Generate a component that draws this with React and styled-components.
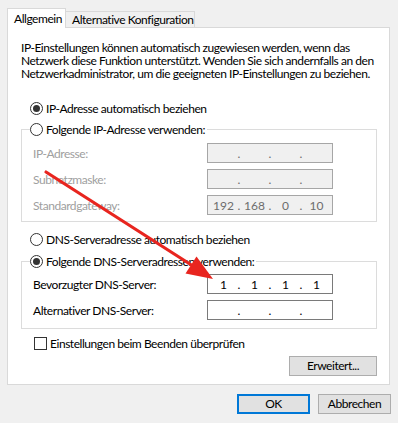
import React from "react";
import styled, { createGlobalStyle } from "styled-components";

const Global = createGlobalStyle`
  html, body { margin: 0; padding: 0; background: #f0f0f0; }
  * { box-sizing: border-box; }
`;

const Root = styled.div`
  position: relative;
  width: 398px;
  height: 423px;
  background: #f0f0f0;
  padding: 8px 8px 0 7px;
  font-family: Lato, "Noto Sans", sans-serif;
  font-size: 12px;
  letter-spacing: -0.45px;
  color: #000;
  overflow: hidden;
`;

const TabStrip = styled.div`
  display: flex;
  align-items: flex-end;
  height: 19px;
`;

const Tab = styled.div`
  position: relative;
  z-index: ${(p) => (p.$active ? 2 : 1)};
  height: ${(p) => (p.$active ? "20px" : "16px")};
  margin-bottom: ${(p) => (p.$active ? "-1px" : "0")};
  margin-left: ${(p) => (p.$active ? "0" : "-1px")};
  width: ${(p) => p.$w}px;
  padding: 0 ${(p) => (p.$active ? "6px" : "6px")};
  display: flex;
  align-items: center;
  background: ${(p) => (p.$active ? "#fff" : "#f0f0f0")};
  border: 1px solid #d9d9d9;
  border-bottom: none;
  white-space: nowrap;
  line-height: 1;
`;

const Panel = styled.div`
  height: 358px;
  background: #fff;
  border: 1px solid #d9d9d9;
  padding: 13px 12px 0 13px;
  display: flex;
  flex-direction: column;
`;

const Intro = styled.p`
  margin: 0;
  line-height: 13px;
  white-space: nowrap;
`;

const RadioRow = styled.label`
  display: flex;
  align-items: center;
  gap: 3px;
  height: 16px;
  white-space: nowrap;
  padding-left: ${(p) => p.$indent || 0}px;
  margin-top: ${(p) => p.$mt || 0}px;
`;

const RadioCircle = styled.span`
  width: 13px;
  height: 13px;
  border-radius: 50%;
  border: 1px solid #333;
  display: flex;
  align-items: center;
  justify-content: center;
  background: #fff;
  flex: none;
  &::after {
    content: "";
    width: 7px;
    height: 7px;
    border-radius: 50%;
    background: #333;
    display: ${(p) => (p.$checked ? "block" : "none")};
  }
`;

const Group = styled.fieldset`
  margin: ${(p) => p.$mt}px 0 0 0;
  border: 1px solid #dcdcdc;
  padding: ${(p) => p.$pt}px 43px ${(p) => p.$pb}px 11px;
  display: flex;
  flex-direction: column;
  gap: 6px;
  min-width: 0;
`;

const Legend = styled.legend`
  padding: 0 2px 0 0;
  margin-left: -3px;
`;

const FieldRow = styled.div`
  display: flex;
  align-items: center;
  justify-content: space-between;
  height: 20px;
  color: ${(p) => (p.$disabled ? "#a0a0a0" : "#000")};
  white-space: nowrap;
`;

const IpBox = styled.div`
  width: 126px;
  height: 20px;
  border: 1px solid ${(p) => (p.$disabled ? "#a6a6a6" : "#7a7a7a")};
  background: ${(p) => (p.$disabled ? "#f0f0f0" : "#fff")};
  color: ${(p) => (p.$disabled ? "#6d6d6d" : "#000")};
  display: flex;
  align-items: center;
  letter-spacing: 0;
`;

const Octet = styled.span`
  flex: 1;
  text-align: center;
`;

const Dot = styled.span`
  width: 0;
  display: flex;
  justify-content: center;
`;

const CheckRow = styled.label`
  display: flex;
  align-items: center;
  gap: 3px;
  height: 16px;
  margin-top: 6px;
  padding-left: 13px;
  white-space: nowrap;
`;

const CheckBox = styled.span`
  width: 13px;
  height: 13px;
  border: 1px solid #333;
  background: #fff;
  flex: none;
`;

const RightBar = styled.div`
  display: flex;
  justify-content: flex-end;
  gap: 8px;
  margin-top: ${(p) => p.$mt}px;
  margin-right: ${(p) => p.$mr || 0}px;
`;

const Button = styled.button`
  font: inherit;
  letter-spacing: inherit;
  color: #000;
  width: ${(p) => p.$w}px;
  height: 20px;
  padding: 0;
  background: #e1e1e1;
  border: ${(p) => (p.$default ? "2px solid #0078d7" : "1px solid #adadad")};
  display: flex;
  align-items: center;
  justify-content: center;
  line-height: 1;
`;

const ArrowLayer = styled.svg`
  position: absolute;
  left: 0;
  top: 0;
  width: 398px;
  height: 423px;
  pointer-events: none;
`;

function Ip({ parts, disabled }) {
  const p = parts || ["", "", "", ""];
  return (
    <IpBox $disabled={disabled}>
      <Octet>{p[0]}</Octet>
      <Dot>.</Dot>
      <Octet>{p[1]}</Octet>
      <Dot>.</Dot>
      <Octet>{p[2]}</Octet>
      <Dot>.</Dot>
      <Octet>{p[3]}</Octet>
    </IpBox>
  );
}

export default function App() {
  return (
    <>
      <Global />
      <Root>
        <TabStrip>
          <Tab $active $w={59}>Allgemein</Tab>
          <Tab $w={130}>Alternative Konfiguration</Tab>
        </TabStrip>
        <Panel>
          <Intro>
            IP-Einstellungen können automatisch zugewiesen werden, wenn das
            <br />
            Netzwerk diese Funktion unterstützt. Wenden Sie sich andernfalls an den
            <br />
            Netzwerkadministrator, um die geeigneten IP-Einstellungen zu beziehen.
          </Intro>
          <RadioRow $indent={9} $mt={20}>
            <RadioCircle $checked />
            IP-Adresse automatisch beziehen
          </RadioRow>
          <Group $mt={5} $pt={6} $pb={6}>
            <Legend>
              <RadioRow>
                <RadioCircle />
                Folgende IP-Adresse verwenden:
              </RadioRow>
            </Legend>
            <FieldRow $disabled>
              IP-Adresse:
              <Ip disabled />
            </FieldRow>
            <FieldRow $disabled>
              Subnetzmaske:
              <Ip disabled />
            </FieldRow>
            <FieldRow $disabled>
              Standardgateway:
              <Ip disabled parts={["192", "168", "0", "10"]} />
            </FieldRow>
          </Group>
          <RadioRow $indent={9} $mt={9}>
            <RadioCircle />
            DNS-Serveradresse automatisch beziehen
          </RadioRow>
          <Group $mt={6} $pt={5} $pb={8}>
            <Legend>
              <RadioRow>
                <RadioCircle $checked />
                Folgende DNS-Serveradressen verwenden:
              </RadioRow>
            </Legend>
            <FieldRow>
              Bevorzugter DNS-Server:
              <Ip parts={["1", "1", "1", "1"]} />
            </FieldRow>
            <FieldRow>
              Alternativer DNS-Server:
              <Ip />
            </FieldRow>
          </Group>
          <CheckRow>
            <CheckBox />
            Einstellungen beim Beenden überprüfen
          </CheckRow>
          <RightBar $mt={5}>
            <Button $w={88}>Erweitert...</Button>
          </RightBar>
        </Panel>
        <RightBar $mt={9} $mr={-1}>
          <Button $w={73} $default>OK</Button>
          <Button $w={73}>Abbrechen</Button>
        </RightBar>
        <ArrowLayer viewBox="0 0 398 423">
          <line x1="46" y1="172" x2="193" y2="266" stroke="#e8251f" strokeWidth="3.2" strokeLinecap="round" />
          <polygon points="213,279 185.5,273.5 196.5,256.5" fill="#e8251f" />
        </ArrowLayer>
      </Root>
    </>
  );
}
